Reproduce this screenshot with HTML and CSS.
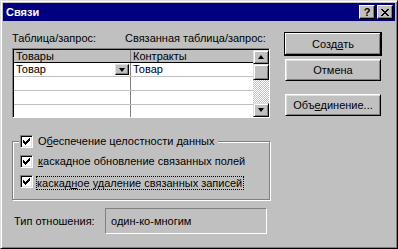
FILE: index.html
```html
<!DOCTYPE html>
<html lang="ru">
<head>
    <meta charset="UTF-8">
    <title>Связи</title>
    <link rel="stylesheet" href="styles.css">
</head>
<body>
    <div class="window">
        <div class="titlebar">
            <span class="title">Связи</span>
            <div class="title-buttons">
                <span class="tbtn help">?</span>
                <span class="tbtn">
                    <svg width="8" height="7" viewBox="0 0 8 7" shape-rendering="crispEdges">
                        <path d="M0 0h2v1h-2zM6 0h2v1h-2zM1 1h2v1h-2zM5 1h2v1h-2zM2 2h4v1h-4zM3 3h2v1h-2zM2 4h4v1h-4zM1 5h2v1h-2zM5 5h2v1h-2zM0 6h2v1h-2zM6 6h2v1h-2z" fill="#000"/>
                    </svg>
                </span>
            </div>
        </div>

        <div class="content">
            <div class="left">
                <div class="labels">
                    <span>Таблица/запрос:</span>
                    <span>Связанная таблица/запрос:</span>
                </div>

                <div class="grid">
                    <div class="cells">
                        <div class="row head">
                            <div class="cell c1">Товары</div>
                            <div class="cell c2">Контракты</div>
                        </div>
                        <div class="row">
                            <div class="cell c1">Товар<span class="drop"><i class="arrow-down"></i></span></div>
                            <div class="cell c2">Товар</div>
                        </div>
                        <div class="row"><div class="cell c1"></div><div class="cell c2"></div></div>
                        <div class="row"><div class="cell c1"></div><div class="cell c2"></div></div>
                        <div class="row"><div class="cell c1"></div><div class="cell c2"></div></div>
                    </div>
                    <div class="scrollbar">
                        <div class="sbtn up"><i class="arrow-up"></i></div>
                        <div class="thumb"></div>
                        <div class="track"></div>
                        <div class="sbtn down"><i class="arrow-down"></i></div>
                    </div>
                </div>

                <fieldset class="group">
                    <legend>
                        <label class="check"><span class="box"><svg width="7" height="7" viewBox="0 0 7 7" shape-rendering="crispEdges"><path d="M0 2h1v3h-1zM1 3h1v3h-1zM2 4h1v3h-1zM3 3h1v3h-1zM4 2h1v3h-1zM5 1h1v3h-1zM6 0h1v3h-1z" fill="#000"/></svg></span><span class="text">О<u>б</u>еспечение целостности данных</span></label>
                    </legend>
                    <label class="check"><span class="box"><svg width="7" height="7" viewBox="0 0 7 7" shape-rendering="crispEdges"><path d="M0 2h1v3h-1zM1 3h1v3h-1zM2 4h1v3h-1zM3 3h1v3h-1zM4 2h1v3h-1zM5 1h1v3h-1zM6 0h1v3h-1z" fill="#000"/></svg></span><span class="text"><u>к</u>аскадное обновление связанных полей</span></label>
                    <label class="check"><span class="box"><svg width="7" height="7" viewBox="0 0 7 7" shape-rendering="crispEdges"><path d="M0 2h1v3h-1zM1 3h1v3h-1zM2 4h1v3h-1zM3 3h1v3h-1zM4 2h1v3h-1zM5 1h1v3h-1zM6 0h1v3h-1z" fill="#000"/></svg></span><span class="text focus">каскад<u>н</u>ое удаление связанных записей</span></label>
                </fieldset>

                <div class="type-row">
                    <span class="type-label">Тип отношения:</span>
                    <div class="type-value">один-ко-многим</div>
                </div>
            </div>

            <div class="right">
                <button class="btn default">Созд<u>а</u>ть</button>
                <button class="btn">Отмена</button>
                <button class="btn join">Объ<u>е</u>динение...</button>
            </div>
        </div>
    </div>
</body>
</html>
```

FILE: styles.css
```css
body {
    margin: 0;
    background: #c0c0c0;
    font-family: "Liberation Sans", Arial, sans-serif;
    font-size: 11px;
    color: #000;
}
.window {
    width: 398px;
    height: 249px;
    box-sizing: border-box;
    border: 1px solid;
    border-color: #dfdfdf #000 #000 #dfdfdf;
    box-shadow: inset 1px 1px #fff, inset -1px -1px #808080;
    padding: 2px;
    background: #c0c0c0;
}
.titlebar {
    height: 18px;
    background: #000080;
    display: flex;
    align-items: center;
    justify-content: space-between;
    padding: 0 2px 0 3px;
}
.title {
    color: #fff;
    font-weight: bold;
    font-size: 11px;
}
.title-buttons {
    display: flex;
    gap: 2px;
}
.tbtn {
    width: 16px;
    height: 14px;
    box-sizing: border-box;
    background: #c0c0c0;
    border: 1px solid;
    border-color: #fff #000 #000 #fff;
    box-shadow: inset -1px -1px #808080;
    display: flex;
    align-items: center;
    justify-content: center;
}
.tbtn.help {
    font-weight: bold;
    font-size: 11px;
    line-height: 12px;
}

.content {
    display: flex;
    padding: 11px 0 0 9px;
}
.left {
    width: 258px;
}
.labels {
    display: grid;
    grid-template-columns: 113px auto;
    height: 13px;
    line-height: 13px;
}

/* таблица связей */
.grid {
    margin-top: 3px;
    height: 70px;
    box-sizing: border-box;
    border: 1px solid;
    border-color: #808080 #fff #fff #808080;
    display: flex;
}
.grid::before {
    content: none;
}
.cells {
    flex: 1;
    border-top: 1px solid #000;
    border-left: 1px solid #000;
    overflow: hidden;
    background: #fff;
}
.row {
    display: flex;
    height: 13px;
    line-height: 13px;
    border-bottom: 1px solid #c0c0c0;
}
.row.head {
    height: 12px;
    line-height: 12px;
    background: #c0c0c0;
    border-bottom: 1px solid #000;
}
.cell {
    padding-left: 2px;
    box-sizing: border-box;
    position: relative;
    white-space: nowrap;
}
.cell.c1 {
    width: 117px;
    border-right: 1px solid #808080;
    display: flex;
    justify-content: space-between;
}
.cell.c2 {
    flex: 1;
}
.drop {
    width: 14px;
    height: 11px;
    margin: 1px 1px 0 0;
    box-sizing: border-box;
    background: #c0c0c0;
    border: 1px solid;
    border-color: #dfdfdf #000 #000 #dfdfdf;
    box-shadow: inset -1px -1px #808080;
    display: flex;
    align-items: center;
    justify-content: center;
}
.arrow-down, .arrow-up {
    width: 0;
    height: 0;
    border-left: 3.5px solid transparent;
    border-right: 3.5px solid transparent;
}
.arrow-down {
    border-top: 4px solid #000;
}
.arrow-up {
    border-bottom: 4px solid #000;
}

.scrollbar {
    width: 16px;
    border-top: 1px solid #000;
    display: flex;
    flex-direction: column;
}
.sbtn, .thumb {
    box-sizing: border-box;
    background: #c0c0c0;
    border: 1px solid;
    border-color: #dfdfdf #000 #000 #dfdfdf;
    box-shadow: inset 1px 1px #fff, inset -1px -1px #808080;
    display: flex;
    align-items: center;
    justify-content: center;
}
.sbtn {
    height: 14px;
}
.thumb {
    height: 16px;
}
.track {
    flex: 1;
    background: repeating-conic-gradient(#fff 0 25%, #c0c0c0 0 50%) 0 0 / 2px 2px;
}

/* группа флажков */
.group {
    margin: 17px 0 0 0;
    padding: 0 6px 11px 6px;
    border: 1px solid #808080;
    box-shadow: 1px 1px 0 #fff, inset 1px 1px 0 #fff;
    min-width: 0;
}
.group legend {
    padding: 0 4px 0 1px;
    background: #c0c0c0;
}
.check {
    display: flex;
    align-items: center;
    height: 13px;
    line-height: 13px;
    white-space: nowrap;
}
.group > .check {
    margin: 7px 0 0 1px;
}
.group legend .check {
    margin: 0;
}
.box {
    width: 13px;
    height: 13px;
    box-sizing: border-box;
    background: #fff;
    border: 1px solid;
    border-color: #808080 #fff #fff #808080;
    box-shadow: inset 1px 1px #000, inset -1px -1px #dfdfdf;
    display: flex;
    align-items: center;
    justify-content: center;
    flex: none;
}
.text {
    margin-left: 5px;
}
.text.focus {
    margin-left: 4px;
    margin-top: 2px;
    padding: 0 1px 0 0;
    line-height: 12px;
    outline: 1px dotted #000;
}

.type-row {
    display: flex;
    align-items: center;
    margin-top: 8px;
}
.type-label {
    width: 93px;
    padding-left: 2px;
    box-sizing: border-box;
}
.type-value {
    width: 162px;
    height: 26px;
    box-sizing: border-box;
    border: 1px solid;
    border-color: #808080 #fff #fff #808080;
    padding-left: 5px;
    line-height: 24px;
}

/* кнопки */
.right {
    margin-left: 14px;
    display: flex;
    flex-direction: column;
    align-items: flex-start;
}
.btn {
    width: 96px;
    height: 22px;
    margin-left: 1px;
    padding: 0;
    font: inherit;
    color: #000;
    background: #c0c0c0;
    border: 1px solid;
    border-color: #fff #000 #000 #fff;
    box-shadow: inset 1px 1px #dfdfdf, inset -1px -1px #808080;
}
.btn.default {
    width: 98px;
    height: 24px;
    margin-left: 0;
    border: 1px solid #000;
    box-shadow: inset -1px -1px #000, inset 1px 1px #fff, inset -2px -2px #808080;
}
.btn + .btn {
    margin-top: 3px;
}
.btn.join {
    margin-top: 13px;
}
```
